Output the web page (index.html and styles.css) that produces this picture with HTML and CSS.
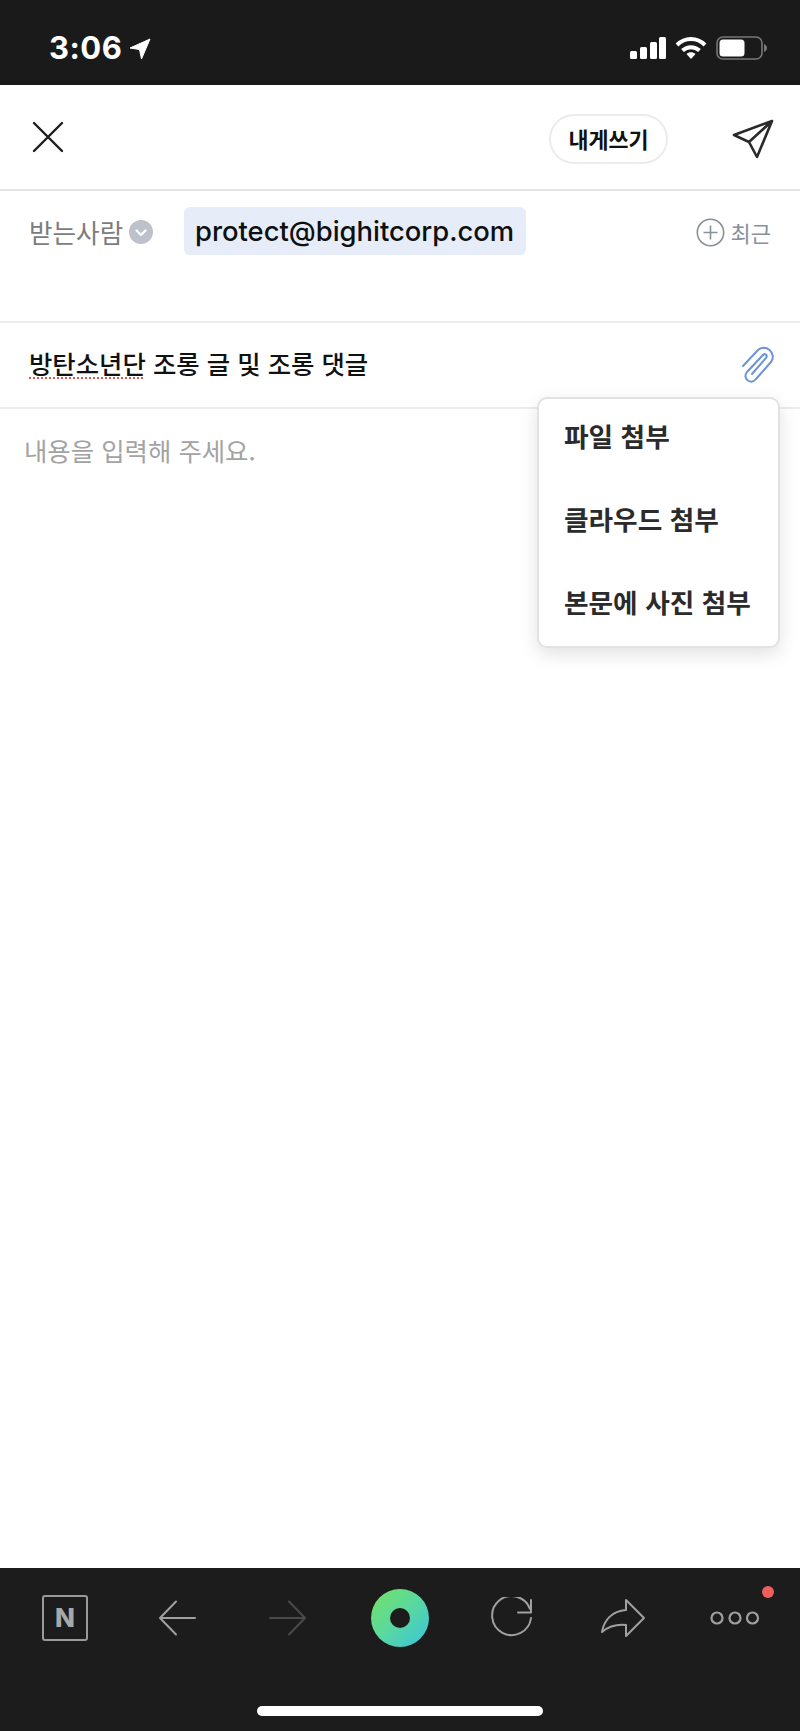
FILE: index.html
```html
<!DOCTYPE html>
<html lang="ko">
<head>
<meta charset="utf-8">
<title>메일 쓰기</title>
<link rel="stylesheet" href="styles.css">
</head>
<body>
<div class="app">
  <div class="status">
    <div class="time-group">
      <span class="time">3:06</span>
      <svg class="loc" width="22" height="22" viewBox="0 0 22 22"><path d="M21 1 L1 10 L10.5 11.5 L12.5 21 Z" fill="#fff" stroke="#fff" stroke-linejoin="round"/></svg>
    </div>
    <div class="status-icons">
      <svg width="36" height="24" viewBox="0 0 36 24"><g fill="#fff"><rect x="0" y="15" width="7" height="8" rx="1.5"/><rect x="10" y="11" width="7" height="12" rx="1.5"/><rect x="20" y="6" width="7" height="17" rx="1.5"/><rect x="29" y="1" width="7" height="22" rx="1.5"/></g></svg>
      <svg width="32" height="24" viewBox="0 0 32 24"><g fill="none" stroke="#fff" stroke-width="4"><path d="M2 9 C10 1 22 1 30 9"/><path d="M7.5 14.5 C12.5 10 19.5 10 24.5 14.5"/></g><path d="M11.5 18 C14 15.5 18 15.5 20.5 18 L16 23 Z" fill="#fff"/></svg>
      <svg width="52" height="24" viewBox="0 0 52 24"><rect x="1" y="1" width="45" height="22" rx="6" fill="none" stroke="#777" stroke-width="1.6"/><rect x="3.5" y="3.5" width="25" height="17" rx="3.5" fill="#fff"/><path d="M48 8 C50 9 51 10 51 12 C51 14 50 15 48 16 Z" fill="#777"/></svg>
    </div>
  </div>

  <header class="topbar">
    <svg class="close" width="32" height="32" viewBox="0 0 32 32"><path d="M2 2 L30 30 M30 2 L2 30" stroke="#1c1c1c" stroke-width="2.4" stroke-linecap="round"/></svg>
    <div class="top-actions">
      <button class="self-btn">내게쓰기</button>
      <svg class="send" width="42" height="40" viewBox="0 0 42 40"><path d="M40 2 L2 16 L17 23 L25 38 Z M40 2 L17 23" fill="none" stroke="#2a2a2a" stroke-width="2.6" stroke-linejoin="round"/></svg>
    </div>
  </header>

  <section class="recipient">
    <div class="label-group">
      <span class="label">받는사람</span>
      <svg width="24" height="24" viewBox="0 0 24 24"><circle cx="12" cy="12" r="12" fill="#bcc1cb"/><path d="M7.5 10.5 L12 15 L16.5 10.5" fill="none" stroke="#fff" stroke-width="2.4" stroke-linecap="round" stroke-linejoin="round"/></svg>
    </div>
    <span class="chip">protect@bighitcorp.com</span>
    <div class="recent">
      <svg width="29" height="29" viewBox="0 0 29 29"><circle cx="14.5" cy="14.5" r="13.2" fill="none" stroke="#8a909b" stroke-width="1.6"/><path d="M14.5 7.5 V21.5 M7.5 14.5 H21.5" stroke="#8a909b" stroke-width="1.6"/></svg>
      <span>최근</span>
    </div>
  </section>

  <section class="subject">
    <div class="subject-text"><span class="misspelled">방탄소년단</span> 조롱 글 및 조롱 댓글</div>
    <svg class="clip" width="34" height="38" viewBox="0 0 34 38"><path d="M23 9 L7 26 C4 30 6 33 8 34.5 C11 36.5 14 35.5 16 33 L31 16 C34 12 33 7 29.5 4 C26 1 21 1 18 4 L3 20" fill="none" stroke="#6b93d6" stroke-width="2" stroke-linecap="round"/><path d="M23 9 C25 7 28 9 26 12 L12 28" fill="none" stroke="#6b93d6" stroke-width="2" stroke-linecap="round"/></svg>
  </section>

  <main class="body">
    <p class="placeholder">내용을 입력해 주세요.</p>
    <ul class="menu">
      <li>파일 첨부</li>
      <li>클라우드 첨부</li>
      <li>본문에 사진 첨부</li>
    </ul>
  </main>

  <footer class="toolbar">
    <div class="tools">
      <div class="n-box"><span>N</span></div>
      <svg width="38" height="36" viewBox="0 0 38 36"><path d="M37 18 H2 M18 1.5 L2 18 L18 34.5" fill="none" stroke="#a0a0a0" stroke-width="2" stroke-linecap="round" stroke-linejoin="round"/></svg>
      <svg width="38" height="36" viewBox="0 0 38 36"><path d="M1 18 H36 M20 1.5 L36 18 L20 34.5" fill="none" stroke="#4a4a4a" stroke-width="2" stroke-linecap="round" stroke-linejoin="round"/></svg>
      <div class="logo"><span class="logo-dot"></span></div>
      <svg width="42" height="42" viewBox="0 0 42 42"><path d="M39 12 A19.5 19.5 0 1 0 40 21" fill="none" stroke="#a0a0a0" stroke-width="2" stroke-linecap="round"/><path d="M40 3 V15.5 H27" fill="none" stroke="#a0a0a0" stroke-width="2" stroke-linecap="round" stroke-linejoin="round"/></svg>
      <svg width="46" height="40" viewBox="0 0 46 40"><path d="M26 2 L44 20 L26 38 V27 C16 26 8 29 2 34 C4 22 12 13 26 12 Z" fill="none" stroke="#a0a0a0" stroke-width="2" stroke-linejoin="round"/></svg>
      <div class="more">
        <svg width="50" height="16" viewBox="0 0 50 16"><g fill="none" stroke="#a0a0a0" stroke-width="2.2"><circle cx="7" cy="8" r="5.5"/><circle cx="25" cy="8" r="5.5"/><circle cx="42.5" cy="8" r="5.5"/></g></svg>
        <span class="badge"></span>
      </div>
    </div>
    <div class="home-bar"></div>
  </footer>
</div>
</body>
</html>
```

FILE: styles.css
```css
* { box-sizing: border-box; }
html, body { margin: 0; padding: 0; }
body { background: #fff; font-family: "Noto Sans CJK KR", "Noto Sans", sans-serif; }
.app { width: 800px; height: 1731px; display: flex; flex-direction: column; overflow: hidden; }

.status { height: 85px; background: #1a1a1a; display: flex; justify-content: space-between; align-items: flex-start; padding: 33px 32px 0 49px; flex: none; }
.time-group { display: flex; align-items: center; gap: 7px; }
.time { font-family: Inter, sans-serif; font-weight: 700; font-size: 31px; line-height: 30px; color: #fff; letter-spacing: .5px; }
.loc { margin-top: 2px; }
.status-icons { display: flex; align-items: center; gap: 9px; padding-top: 3px; }

.topbar { height: 106px; border-bottom: 2px solid #e4e4e4; display: flex; align-items: center; justify-content: space-between; padding: 0 26px 0 32px; flex: none; }
.top-actions { display: flex; align-items: center; gap: 64px; padding-top: 3px; }
.self-btn { width: 119px; height: 50px; border: 2px solid #ececec; border-radius: 25px; background: #fff; font-family: inherit; font-size: 21.8px; font-weight: 700; color: #111; padding: 0; }

.recipient { height: 132px; border-bottom: 2px solid #ececec; display: flex; align-items: flex-start; padding: 16px 29px 0 29px; flex: none; }
.label-group { display: flex; align-items: center; gap: 6px; height: 50px; width: 155px; flex: none; }
.label { font-size: 25.6px; color: #7c7c7c; line-height: 1; }
.chip { height: 48px; padding: 1px 12px 0 11px; background: #e6edf8; border-radius: 6px; font-family: Inter, sans-serif; font-weight: 500; font-size: 27.4px; line-height: 47px; color: #0f0f0f; white-space: nowrap; }
.recent { margin-left: auto; height: 50px; display: flex; align-items: center; gap: 6px; font-size: 22px; color: #8a909b; }

.subject { height: 86px; border-bottom: 2px solid #ececec; display: flex; align-items: center; justify-content: space-between; padding: 0 26px 0 29px; flex: none; }
.subject-text { font-size: 25.4px; font-weight: 500; color: #111; line-height: 1.2; margin-bottom: 4px; }
.misspelled { text-decoration: underline dotted #d9574f 2px; text-underline-offset: 4px; }

.body { flex: 1; position: relative; padding: 21px 24px 0; min-height: 0; }
.placeholder { margin: 0; font-size: 25.4px; line-height: 40px; color: #a3a3a3; }
.menu { position: absolute; left: 537px; top: -12px; width: 243px; height: 251px; margin: 0; padding: 17px 0 0 25px; list-style: none; background: #fff; border: 2px solid #e2e2e2; border-radius: 10px; box-shadow: 0 6px 18px rgba(0,0,0,.12); display: flex; flex-direction: column; gap: 43px; font-size: 26.7px; font-weight: 700; color: #2b2b2b; }
.menu li { line-height: 40px; white-space: nowrap; }

.toolbar { height: 163px; background: #1c1c1c; flex: none; display: flex; flex-direction: column; }
.tools { display: grid; grid-template-columns: repeat(7, 1fr); justify-items: center; align-items: center; height: 96px; margin-top: 2px; padding: 0 9px; }
.n-box { width: 46px; height: 46px; border: 2px solid #9a9a9a; border-radius: 3px; display: flex; align-items: center; justify-content: center; font-family: Inter, sans-serif; font-weight: 800; font-size: 26px; line-height: 1; color: #a8a8a8; }
.logo { width: 58px; height: 58px; border-radius: 50%; background: linear-gradient(135deg, #6ee06f 10%, #5ad8a0 50%, #3bc6d8 95%); display: flex; align-items: center; justify-content: center; }
.logo-dot { width: 20px; height: 20px; border-radius: 50%; background: #1c1c1c; }
.more { position: relative; width: 50px; height: 16px; display: flex; }
.badge { position: absolute; right: -14px; top: -24px; width: 12px; height: 12px; border-radius: 50%; background: #ee5f5b; }
.home-bar { width: 286px; height: 10px; margin: 40px auto 0; border-radius: 5px; background: #fff; }
```
